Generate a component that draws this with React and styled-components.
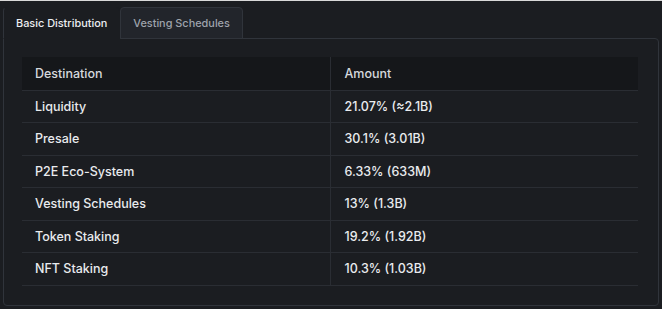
import React from 'react'
import { useState } from 'react'
import styled, { createGlobalStyle } from 'styled-components'

const rows = [
    { name: 'Liquidity', amount: '21.07% (≈2.1B)' },
    { name: 'Presale', amount: '30.1% (3.01B)' },
    { name: 'P2E Eco-System', amount: '6.33% (633M)' },
    { name: 'Vesting Schedules', amount: '13% (1.3B)' },
    { name: 'Token Staking', amount: '19.2% (1.92B)' },
    { name: 'NFT Staking', amount: '10.3% (1.03B)' },
]

const tabs = ['Basic Distribution', 'Vesting Schedules']

const App = () => {
    const [active, setActive] = useState(0)

    return (
        <>
            <GlobalStyle />
            <Page>
                <TabBar>
                    {tabs.map((t, i) => (
                        <Tab key={t} $active={i === active} onClick={() => setActive(i)}>
                            {t}
                        </Tab>
                    ))}
                </TabBar>
                <Panel>
                    <Table>
                        <thead>
                            <HeadRow>
                                <HeadCell>Destination</HeadCell>
                                <HeadCell>Amount</HeadCell>
                            </HeadRow>
                        </thead>
                        <tbody>
                            {rows.map(r => (
                                <Row key={r.name}>
                                    <Cell>{r.name}</Cell>
                                    <Cell>{r.amount}</Cell>
                                </Row>
                            ))}
                        </tbody>
                    </Table>
                </Panel>
            </Page>
        </>
    )
}

const GlobalStyle = createGlobalStyle`
    html, body {
        margin: 0;
        background: #1b1d21;
    }
    body {
        font-family: Inter, "Noto Sans", sans-serif;
        -webkit-font-smoothing: antialiased;
    }
`

const Page = styled.div`
    box-sizing: border-box;
    width: 662px;
    height: 309px;
    border-top: 1px solid #d9d9d9;
    padding: 6px 3px 3px 3px;
    background: #1b1d21;
    display: flex;
    flex-direction: column;
`

const TabBar = styled.div`
    display: flex;
    position: relative;
    z-index: 1;
    margin-bottom: -1px;
`

const Tab = styled.div`
    box-sizing: border-box;
    height: 32px;
    display: flex;
    align-items: center;
    padding: 0 12px;
    font-size: 10.9px;
    font-weight: 500;
    color: ${p => (p.$active ? '#eceef1' : '#9ea3ab')};
    background: ${p => (p.$active ? '#1b1d21' : '#22252b')};
    border: 1px solid ${p => (p.$active ? '#1b1d21' : '#30343b')};
    border-left-color: #30343b;
    border-bottom: 1px solid ${p => (p.$active ? '#1b1d21' : '#30343b')};
    border-radius: 4px 4px 0 0;
    cursor: pointer;
`

const Panel = styled.div`
    flex: 1;
    box-sizing: border-box;
    border: 1px solid #30343b;
    border-radius: 0 4px 4px 4px;
    padding: 18px 20px 0 18px;
`

const Table = styled.table`
    width: 100%;
    border-collapse: collapse;
    font-size: 12.5px;
    font-weight: 500;
`

const HeadRow = styled.tr`
    height: 33px;
    background: #15171a;
    border-bottom: 1px solid #2a2d33;
`

const HeadCell = styled.th`
    text-align: left;
    color: #d6d9dd;
    font-weight: 500;
    padding: 0 13px;
    width: 50%;
    & + & {
        border-left: 1px solid #2a2d33;
        padding-left: 14px;
    }
`

const Row = styled.tr`
    height: 32.5px;
    border-bottom: 1px solid #2a2d33;
`

const Cell = styled.td`
    color: #e9ebee;
    padding: 0 13px;
    & + & {
        border-left: 1px solid #2a2d33;
        padding-left: 14px;
    }
`

export default App
